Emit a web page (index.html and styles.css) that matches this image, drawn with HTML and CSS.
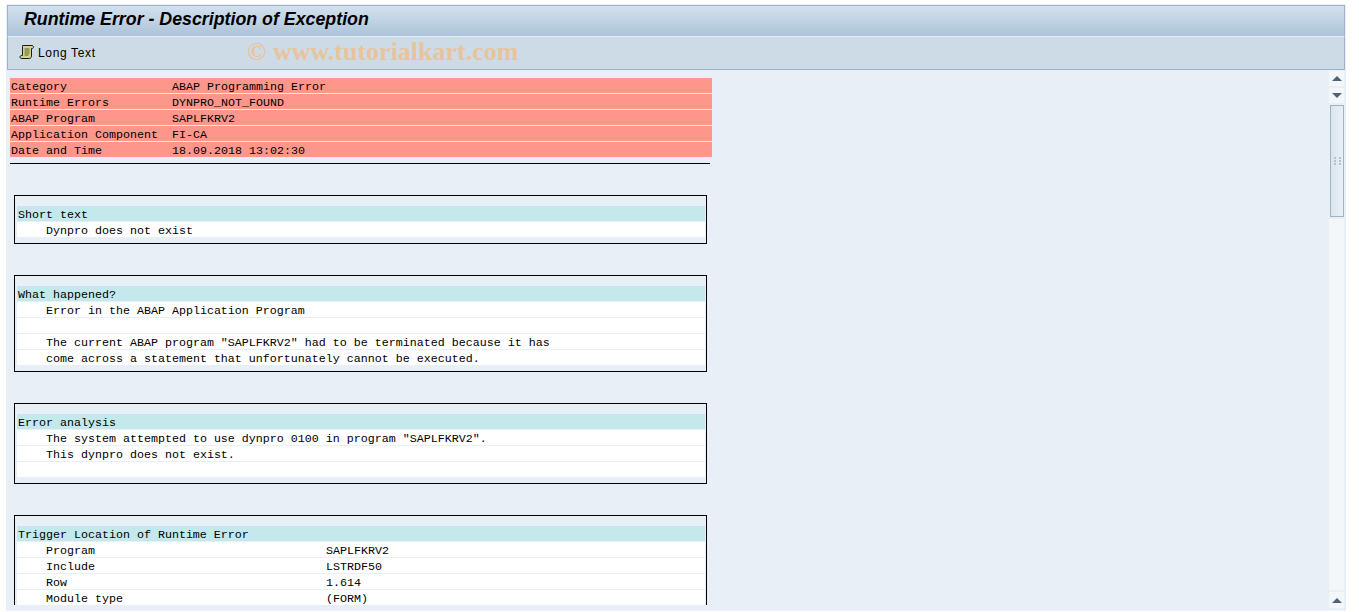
FILE: index.html
```html
<!DOCTYPE html>
<html lang="en">
<head>
    <meta charset="UTF-8">
    <title>Runtime Error - Description of Exception</title>
    <link rel="stylesheet" href="styles.css">
</head>
<body>
    <div class="window">
        <div class="title-bar"><h1>Runtime Error - Description of Exception</h1></div>
        <div class="toolbar">
            <button class="tool-btn">
                <svg class="scroll-icon" width="16" height="16" viewBox="0 0 16 16">
                    <path d="M3.500 1.500H13c1.300 0 1.500 1.200 1.500 1.700 0 .8-.6 1.300-1.500 1.300h-.5v7.500c0 1.200-.8 2.500-2 2.500H3c-1.300 0-2-.6-2-1.500s.7-1.500 2-1.500h.5V3c0-.9-.2-1.500 0-1.500z" fill="#d3d28e" stroke="#1c1c10"/>
                    <path d="M5.500 5h5M5.500 7h5M5.500 9h5M5.500 11h4" stroke="#55632c"/>
                </svg>
                <span>Long Text</span>
            </button>
            <span class="watermark">© www.tutorialkart.com</span>
        </div>
        <div class="content">
            <div class="report">
                <div class="summary">
                    <div class="summary-row"><span class="key">Category</span>ABAP Programming Error</div>
                    <div class="summary-row"><span class="key">Runtime Errors</span>DYNPRO_NOT_FOUND</div>
                    <div class="summary-row"><span class="key">ABAP Program</span>SAPLFKRV2</div>
                    <div class="summary-row"><span class="key">Application Component</span>FI-CA</div>
                    <div class="summary-row"><span class="key">Date and Time</span>18.09.2018 13:02:30</div>
                </div>
                <div class="summary-rule"></div>

                <div class="box">
                    <div class="box-head">Short text</div>
                    <div class="line">Dynpro does not exist</div>
                </div>

                <div class="box">
                    <div class="box-head">What happened?</div>
                    <div class="line">Error in the ABAP Application Program</div>
                    <div class="line"></div>
                    <div class="line">The current ABAP program "SAPLFKRV2" had to be terminated because it has</div>
                    <div class="line">come across a statement that unfortunately cannot be executed.</div>
                </div>

                <div class="box">
                    <div class="box-head">Error analysis</div>
                    <div class="line">The system attempted to use dynpro 0100 in program "SAPLFKRV2".</div>
                    <div class="line">This dynpro does not exist.</div>
                    <div class="line"></div>
                </div>

                <div class="box">
                    <div class="box-head">Trigger Location of Runtime Error</div>
                    <div class="line"><span class="label">Program</span>SAPLFKRV2</div>
                    <div class="line"><span class="label">Include</span>LSTRDF50</div>
                    <div class="line"><span class="label">Row</span>1.614</div>
                    <div class="line"><span class="label">Module type</span>(FORM)</div>
                </div>
            </div>
            <div class="scrollbar">
                <div class="scroll-btn"><span class="arrow-up"></span></div>
                <div class="scroll-btn"><span class="arrow-down"></span></div>
                <div class="thumb"><span class="grip"></span></div>
                <div class="track"></div>
                <div class="scroll-btn scroll-btn-tall"><span class="arrow-up"></span></div>
                <div class="scroll-btn"></div>
            </div>
        </div>
    </div>
</body>
</html>
```

FILE: styles.css
```css
body {
    margin: 0;
    background-color: #ffffff;
    overflow: hidden;
}
.window {
    height: 607px;
    box-sizing: border-box;
    margin: 4px 13px 0 6px;
    padding-top: 1px;
    background-color: #e8eff7;
    display: flex;
    flex-direction: column;
    overflow: hidden;
}
.title-bar {
    height: 26px;
    margin: 0 1px;
    display: flex;
    align-items: center;
    padding: 0 0 4px 16px;
    border: 1px solid #9fb1c2;
    border-bottom: none;
    background: linear-gradient(#d3e1ee, #adc3d9);
}
h1 {
    margin: 0;
    font-family: "Liberation Sans", Arial, sans-serif;
    font-size: 17.8px;
    font-weight: bold;
    font-style: italic;
    color: #000;
}
.toolbar {
    height: 32px;
    margin: 0 1px;
    display: flex;
    align-items: center;
    border: 1px solid #9fb1c2;
    border-top: 1px solid #e4edf5;
    background-color: #cddbe7;
    position: relative;
}
.tool-btn {
    display: flex;
    align-items: center;
    gap: 3px;
    margin-left: 11px;
    padding: 0;
    border: none;
    background: none;
    font-family: "Liberation Sans", Arial, sans-serif;
    font-size: 12px;
    letter-spacing: 0.65px;
    color: #000;
}
.scroll-icon {
    margin-top: -3px;
}
.watermark {
    position: absolute;
    left: 239px;
    top: 0;
    font-family: "Liberation Serif", "Times New Roman", serif;
    font-size: 26px;
    font-weight: bold;
    color: #e8c49c;
}
.content {
    flex: 1;
    display: flex;
    align-items: flex-start;
    min-height: 0;
}
.report {
    flex: 1;
    height: 535px;
    box-sizing: border-box;
    padding: 8px 0 0 4px;
    overflow: hidden;
    font-family: "Liberation Mono", "Courier New", monospace;
    font-size: 11.67px;
    color: #000;
}
.summary {
    width: 702px;
}
.summary-row {
    height: 15px;
    line-height: 19px;
    padding-left: 1px;
    margin-bottom: 1px;
    background-color: #ff968c;
    white-space: pre;
}
.key {
    display: inline-block;
    width: 161px;
    height: 15px;
}
.summary-rule {
    width: 700px;
    height: 1px;
    margin-top: 6px;
    background-color: #000;
}
.box {
    width: 688px;
    margin: 31px 0 0 4px;
    padding: 10px 1px 5px 2px;
    border: 1px solid #000;
}
.box-head {
    height: 15px;
    line-height: 19px;
    margin-bottom: 1px;
    padding-left: 1px;
    background-color: #c3e9ec;
}
.line {
    height: 15px;
    line-height: 19px;
    margin-bottom: 1px;
    padding-left: 29px;
    background-color: #fff;
    white-space: pre;
}
.label {
    display: inline-block;
    width: 280px;
    height: 15px;
}
.scrollbar {
    width: 15px;
    margin-right: 2px;
    padding-top: 1px;
    display: flex;
    flex-direction: column;
    flex: none;
    gap: 2px;
}
.scroll-btn {
    height: 15px;
    background-color: #f4f7fa;
    display: flex;
    align-items: center;
    justify-content: center;
    flex: none;
}
.scroll-btn-tall {
    height: 16px;
}
.arrow-up {
    border: 5px solid transparent;
    border-top: none;
    border-bottom: 5px solid #4e6377;
}
.arrow-down {
    border: 5px solid transparent;
    border-bottom: none;
    border-top: 5px solid #4e6377;
}
.thumb {
    flex: none;
    height: 110px;
    margin-left: 1px;
    border: 1px solid #a3b2bf;
    background: linear-gradient(to right, #dbe5ee, #e9f0f6);
    display: flex;
    align-items: center;
    justify-content: center;
}
.grip {
    width: 7px;
    height: 8px;
    background-image:
        repeating-linear-gradient(#b4c0cc 0 2px, transparent 2px 3px),
        repeating-linear-gradient(#b4c0cc 0 2px, transparent 2px 3px);
    background-size: 2px 8px;
    background-position: 0 0, 5px 0;
    background-repeat: no-repeat;
}
.track {
    flex: none;
    height: 371px;
    background-color: #f4f7fa;
}
```
